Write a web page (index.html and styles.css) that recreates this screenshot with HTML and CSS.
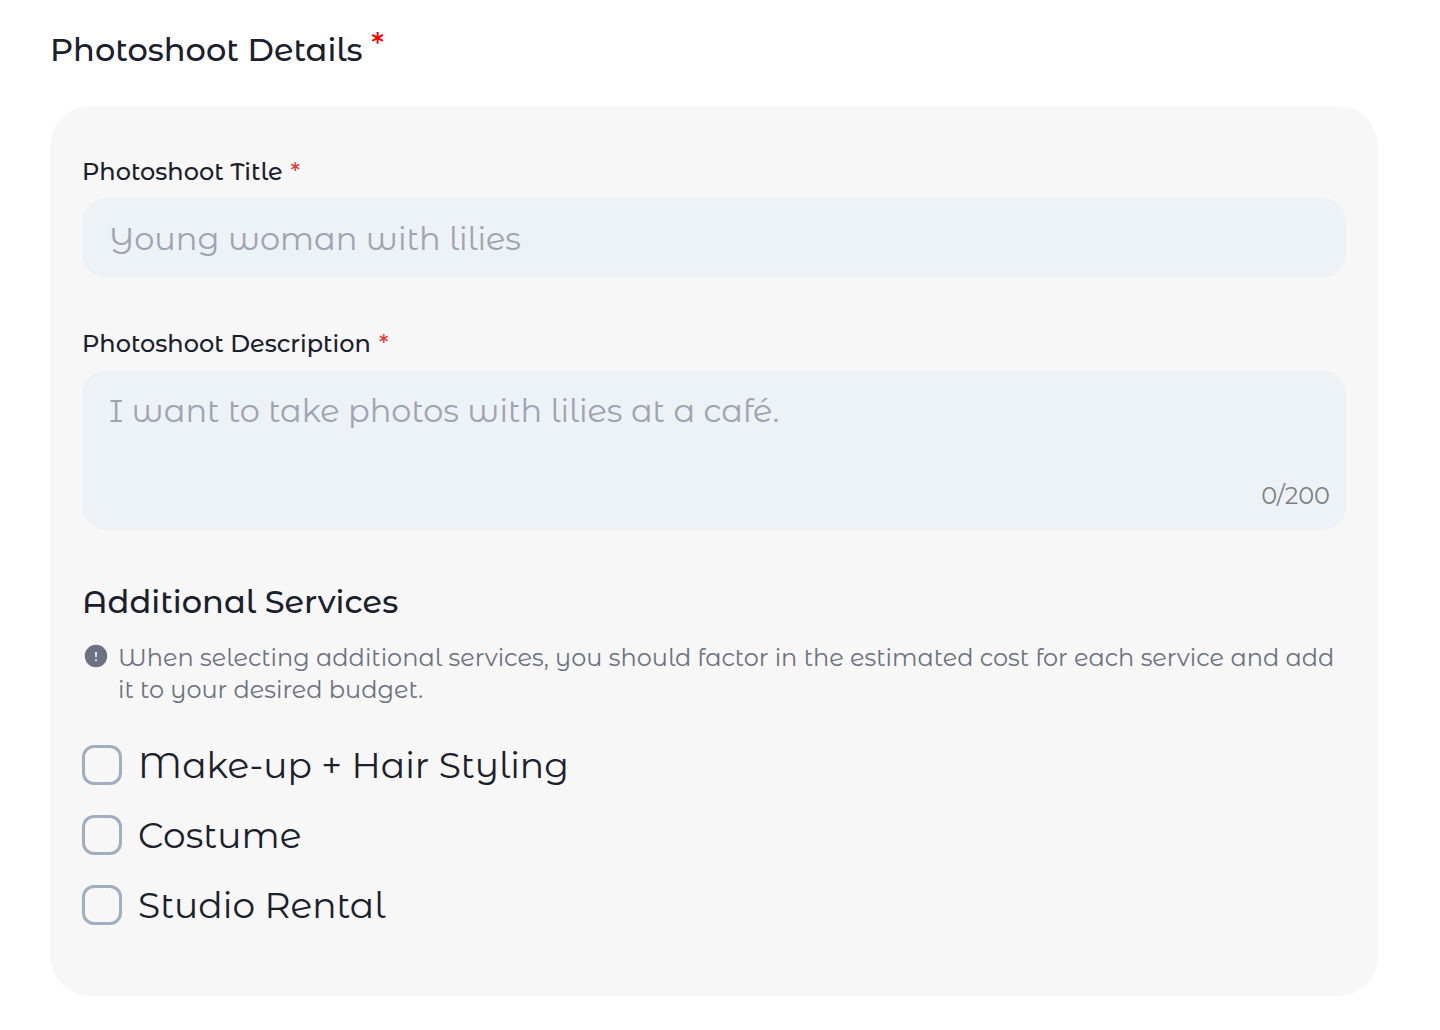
FILE: index.html
```
<!DOCTYPE html>
<html lang="en">
<head>
  <meta charset="UTF-8">
  <meta name="viewport" content="width=device-width, initial-scale=1.0">
  <title>Photoshoot Details</title>
  <link rel="stylesheet" href="styles.css">
</head>
<body>
  <form class="details">
    <h1 class="page-title">Photoshoot Details <span class="required">*</span></h1>

    <div class="card">
      <div class="field">
        <label class="field-label" for="title">Photoshoot Title<span class="required">*</span></label>
        <input class="text-box" type="text" id="title" placeholder="Young woman with lilies">
      </div>

      <div class="field">
        <label class="field-label" for="description">Photoshoot Description<span class="required">*</span></label>
        <div class="textarea-wrap">
          <textarea class="text-box text-area" id="description" maxlength="200" placeholder="I want to take photos with lilies at a café."></textarea>
          <span class="counter">0/200</span>
        </div>
      </div>

      <h2 class="section-title">Additional Services</h2>
      <div class="note">
        <svg class="note-icon" viewBox="0 0 24 24" aria-hidden="true">
          <circle cx="12" cy="12" r="11.2" fill="#6b7280"/>
          <path d="M11 8h2l-.4 5.6h-1.2z" fill="#f7f7f7"/>
          <circle cx="12" cy="16.2" r="1" fill="#f7f7f7"/>
        </svg>
        <p class="note-text">When selecting additional services, you should factor in the estimated cost for each service and add it to your desired budget.</p>
      </div>

      <div class="services">
        <label class="service"><input class="check" type="checkbox" name="makeup"><span>Make-up + Hair Styling</span></label>
        <label class="service"><input class="check" type="checkbox" name="costume"><span>Costume</span></label>
        <label class="service"><input class="check" type="checkbox" name="studio"><span>Studio Rental</span></label>
      </div>
    </div>
  </form>
</body>
</html>
```

FILE: styles.css
```
* {
  box-sizing: border-box;
}
body {
  margin: 0;
  background: #fff;
  color: #1a202c;
  font-family: "Montserrat Alternates", "Montserrat", "Open Sans", sans-serif;
}
.details {
  padding: 26px 62px 34px 50px;
}
.page-title {
  margin: 0 0 32px;
  font-size: 32px;
  line-height: 48px;
  font-weight: 500;
}
.required {
  color: #e53e3e;
}
.page-title .required {
  color: #f00;
  vertical-align: top;
  line-height: 38px;
}
.card {
  padding: 48px 32px 68px;
  border-radius: 40px;
  background: #f7f7f7;
}
.field {
  margin-bottom: 48px;
}
.field-label {
  display: block;
  margin-bottom: 8px;
  font-size: 24px;
  line-height: 36px;
  font-weight: 500;
}
.field-label .required {
  margin-left: 8px;
}
.text-box {
  display: block;
  width: 100%;
  height: 80px;
  padding: 0 27px;
  border: 0;
  border-radius: 24px;
  background: #edf2f7;
  color: #1a202c;
  font-family: inherit;
  font-size: 32px;
}
.text-box::placeholder {
  color: #a0a3b1;
  opacity: 1;
}
.textarea-wrap {
  position: relative;
}
.text-area {
  height: 160px;
  padding: 16px 27px;
  line-height: 50px;
  resize: none;
}
.counter {
  position: absolute;
  right: 16px;
  bottom: 16px;
  color: #808080;
  font-size: 24px;
  line-height: 36px;
}
.section-title {
  margin: 0 0 16px;
  font-size: 32px;
  line-height: 48px;
  font-weight: 500;
}
.note {
  display: flex;
  gap: 10px;
  padding-left: 2px;
}
.note-icon {
  flex: none;
  width: 24px;
  height: 24px;
  margin-top: 2px;
}
.note-text {
  margin: 0;
  color: #6b7280;
  font-size: 24px;
  line-height: 32px;
}
.services {
  display: flex;
  flex-direction: column;
  align-items: flex-start;
  gap: 24px;
  margin-top: 36px;
}
.service {
  display: flex;
  align-items: center;
  gap: 16px;
  font-size: 36px;
  line-height: 46px;
}
.check {
  appearance: none;
  width: 40px;
  height: 40px;
  margin: 0;
  border: 3px solid #a0aec0;
  border-radius: 12px;
}
```
